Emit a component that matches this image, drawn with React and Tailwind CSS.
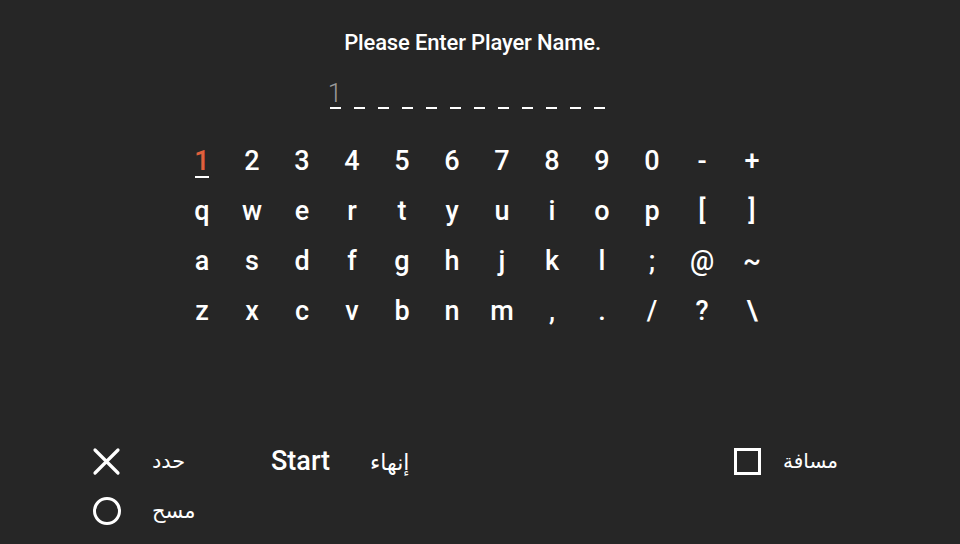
import React from "react";

const rows = [
  ["1", "2", "3", "4", "5", "6", "7", "8", "9", "0", "-", "+"],
  ["q", "w", "e", "r", "t", "y", "u", "i", "o", "p", "[", "]"],
  ["a", "s", "d", "f", "g", "h", "j", "k", "l", ";", "@", "~"],
  ["z", "x", "c", "v", "b", "n", "m", ",", ".", "/", "?", "\\"],
];

function Key({ ch, active }) {
  return (
    <div className="w-[50px] h-[50px] flex items-center justify-center">
      {active ? (
        <span className="relative text-[#e0603c] leading-none">
          {ch}
          <span className="absolute left-[1px] right-[1px] -bottom-[3px] h-[2px] bg-white" />
        </span>
      ) : (
        <span className="leading-none">{ch}</span>
      )}
    </div>
  );
}

export default function App() {
  const slots = Array.from({ length: 12 });
  return (
    <div className="w-[960px] h-[544px] bg-[#262626] text-white font-['Roboto',sans-serif] flex flex-col overflow-hidden">
      <div className="h-[84px] flex items-center justify-center">
        <span className="text-[22px] font-medium tracking-[-0.15px] mr-[15px]">Please Enter Player Name.</span>
      </div>
      <div className="h-[32px] flex justify-center">
        <div className="flex mr-[26px]">
          {slots.map((_, i) => (
            <div key={i} className="w-[24px] h-[32px] flex flex-col items-center justify-end">
              {i === 0 && (
                <span className="text-[26px] font-light text-[#9a9a9a] leading-none mb-[1px]">1</span>
              )}
              <div className="w-[11px] h-[2px] bg-white mb-[7px] shrink-0" />
            </div>
          ))}
        </div>
      </div>
      <div className="mt-[20px] pl-[177px] text-[27px] font-medium">
        {rows.map((row, ri) => (
          <div key={ri} className="flex">
            {row.map((ch, ci) => (
              <Key key={ci} ch={ch} active={ri === 0 && ci === 0} />
            ))}
          </div>
        ))}
      </div>
      <div className="mt-auto mb-[8px] flex flex-col">
        <div className="h-[50px] flex items-center pl-[92px] pr-[122px]">
          <svg width="29" height="29" viewBox="0 0 29 29" className="shrink-0">
            <path d="M3 3 L26 26 M26 3 L3 26" stroke="white" strokeWidth="3.2" strokeLinecap="round" />
          </svg>
          <span dir="rtl" className="ml-[31px] w-[119px] text-left text-[21px] font-['Noto_Sans','DejaVu_Sans',sans-serif]">حدد</span>
          <span className="w-[99px] text-[27px] font-medium">Start</span>
          <span dir="rtl" className="text-[22px] font-['Noto_Sans','DejaVu_Sans',sans-serif]">إنهاء</span>
          <div className="flex-1" />
          <div className="w-[27px] h-[27px] border-[3px] border-white shrink-0" />
          <span dir="rtl" className="ml-[22px] text-[20px] font-['Noto_Sans','DejaVu_Sans',sans-serif]">مسافة</span>
        </div>
        <div className="h-[50px] flex items-center pl-[92px]">
          <svg width="30" height="30" viewBox="0 0 30 30" className="shrink-0">
            <circle cx="15" cy="15" r="12.5" fill="none" stroke="white" strokeWidth="3" />
          </svg>
          <span dir="rtl" className="ml-[30px] text-[21px] font-['Noto_Sans','DejaVu_Sans',sans-serif]">مسح</span>
        </div>
      </div>
    </div>
  );
}
